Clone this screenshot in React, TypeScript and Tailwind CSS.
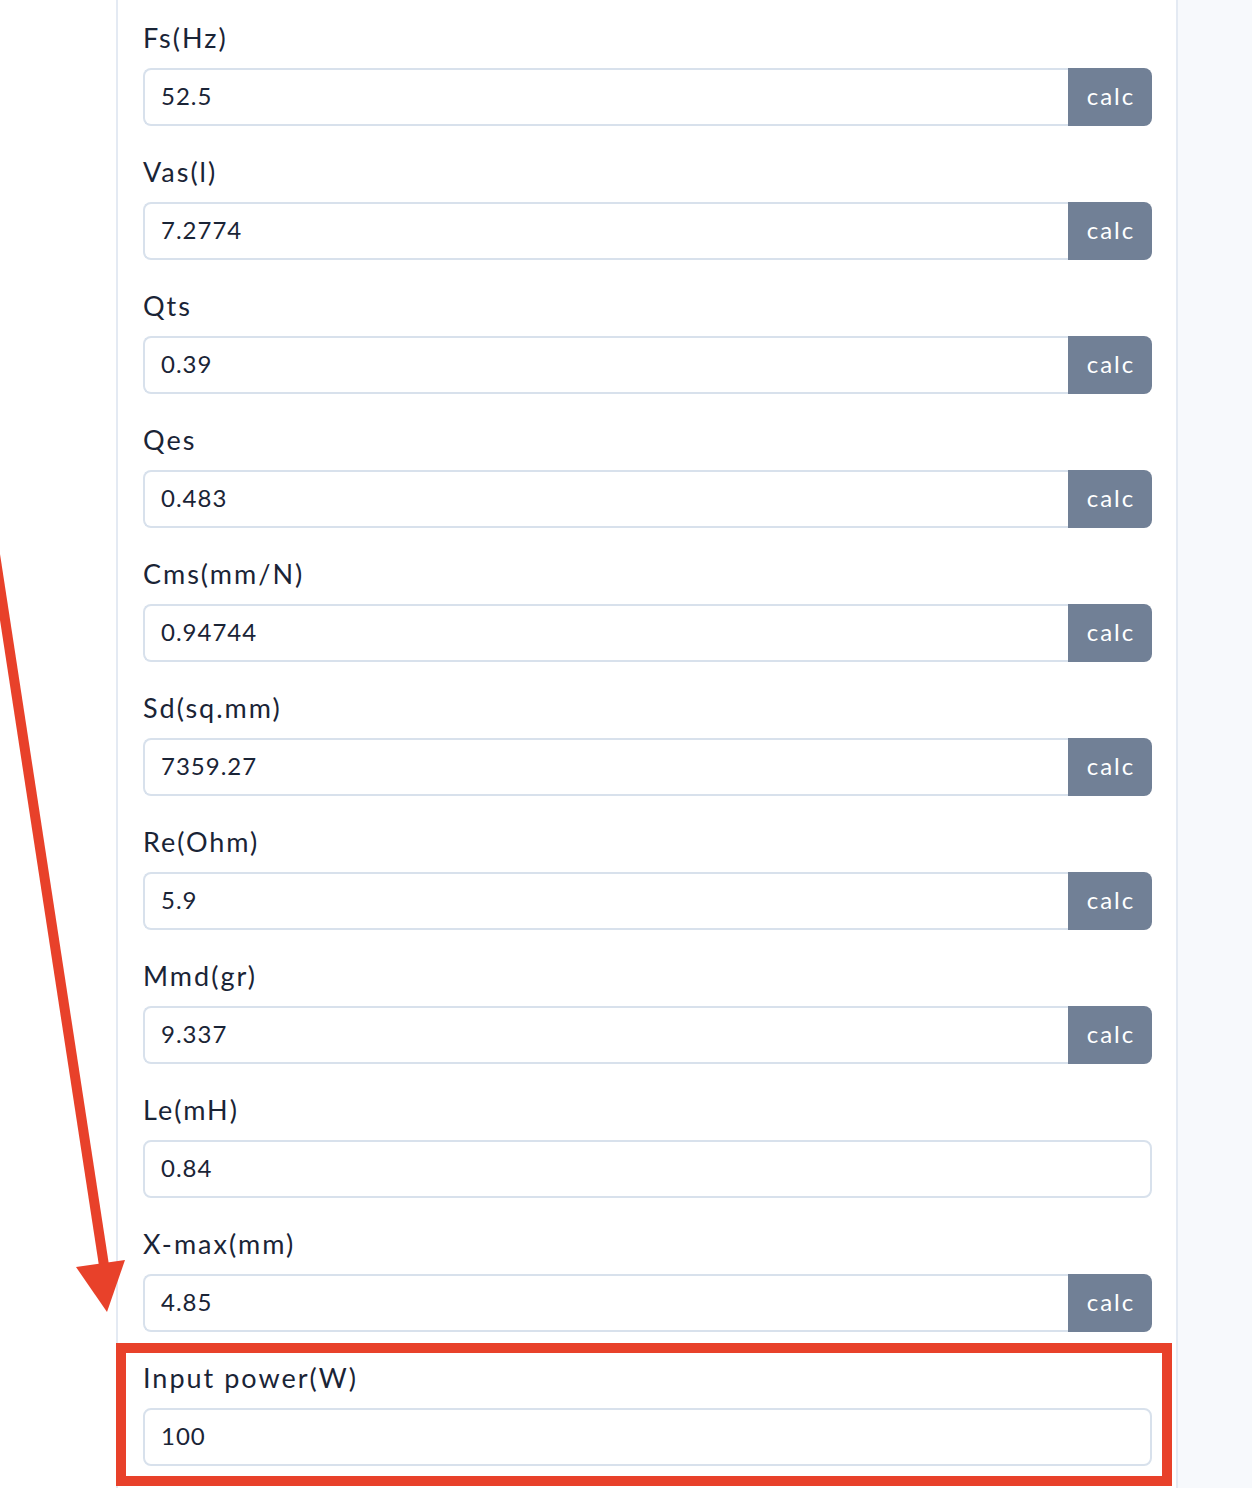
const fields: { label: string; value: string; calc: boolean }[] = [
  { label: "Fs(Hz)", value: "52.5", calc: true },
  { label: "Vas(l)", value: "7.2774", calc: true },
  { label: "Qts", value: "0.39", calc: true },
  { label: "Qes", value: "0.483", calc: true },
  { label: "Cms(mm/N)", value: "0.94744", calc: true },
  { label: "Sd(sq.mm)", value: "7359.27", calc: true },
  { label: "Re(Ohm)", value: "5.9", calc: true },
  { label: "Mmd(gr)", value: "9.337", calc: true },
  { label: "Le(mH)", value: "0.84", calc: false },
  { label: "X-max(mm)", value: "4.85", calc: true },
  { label: "Input power(W)", value: "100", calc: false },
];

function Field({ label, value, calc }: { label: string; value: string; calc: boolean }) {
  return (
    <div className="flex flex-col">
      <label className="h-[36px] leading-[36px] text-[27px] text-[#1a2436] tracking-[2px]">{label}</label>
      <div className="mt-3 flex h-[58px]">
        <input
          readOnly
          value={value}
          className={
            "h-full flex-1 min-w-0 border-2 border-[#d8e1ec] bg-white pl-4 pb-[3px] text-[24px] text-[#1a2436] tracking-[1px] outline-none " +
            (calc ? "rounded-l-lg border-r-0" : "rounded-lg")
          }
        />
        {calc && (
          <button className="h-full w-[84px] rounded-r-lg bg-[#718096] pb-[3px] pl-[2px] text-[24px] text-white tracking-[2px]">
            calc
          </button>
        )}
      </div>
    </div>
  );
}

export default function App() {
  return (
    <div className="relative flex h-[1488px] overflow-hidden bg-white" style={{ fontFamily: "Lato, 'Noto Sans', sans-serif" }}>
      <div className="w-[116px] shrink-0 bg-white" />
      <div className="w-[1062px] shrink-0 border-x-2 border-[#e4eaf3] bg-white pl-[25px] pr-[24px] pt-[20px]">
        <div className="flex flex-col gap-[28px]">
          {fields.map((f) => (
            <Field key={f.label} {...f} />
          ))}
        </div>
      </div>
      <div className="flex-1 bg-[#f7f9fc]" />

      {/* annotation: highlight box */}
      <div className="absolute left-[116px] top-[1343px] h-[143px] w-[1056px] border-[10px] border-[#e8412a]" />

      {/* annotation: arrow */}
      <svg className="pointer-events-none absolute left-0 top-0" width="200" height="1488">
        <line x1="-90" y1="0" x2="105" y2="1272" stroke="#e8412a" strokeWidth="10" />
        <polygon points="76,1267 125,1260 107,1312" fill="#e8412a" />
      </svg>
    </div>
  );
}
